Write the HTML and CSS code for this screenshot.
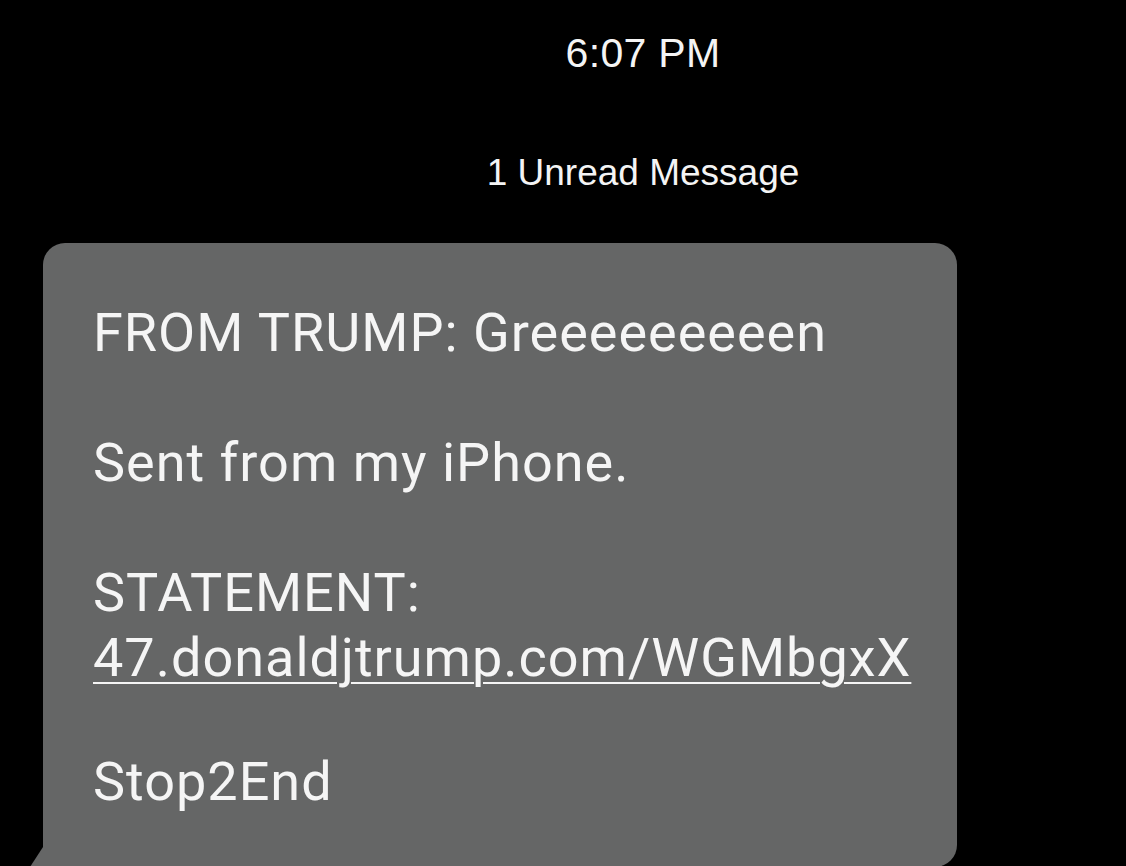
FILE: index.html
```html
<!DOCTYPE html>
<html lang="en">
<head>
<meta charset="utf-8">
<title>Message</title>
<link rel="stylesheet" href="styles.css">
</head>
<body>
<main class="screen">
  <header class="header">
    <div class="time">6:07 PM</div>
    <div class="unread">1 Unread Message</div>
  </header>
  <section class="bubble">
    <p class="para">FROM TRUMP: Greeeeeeeeen</p>
    <p class="para">Sent from my iPhone.</p>
    <p class="para">STATEMENT:<br><a class="link" href="#">47.donaldjtrump.com/WGMbgxX</a></p>
    <p class="para">Stop2End</p>
  </section>
</main>
</body>
</html>
```

FILE: styles.css
```css
html, body {
  margin: 0;
  padding: 0;
  background: #000;
  height: 100%;
  overflow: hidden;
}

.screen {
  display: flex;
  flex-direction: column;
  width: 1126px;
  height: 866px;
  overflow: hidden;
  background: #000;
}

.header {
  display: flex;
  flex-direction: column;
  align-items: center;
  padding: 30px 0 0 160px;
  color: #f4f4f4;
  font-family: "Liberation Sans", Arial, sans-serif;
}

.time {
  font-size: 41px;
  line-height: 47px;
  letter-spacing: 0.3px;
}

.unread {
  margin-top: 74px;
  font-size: 37px;
  line-height: 43px;
  letter-spacing: 0;
}

.bubble {
  position: relative;
  margin: 49px 169px 0 43px;
  padding: 57px 40px 53px 50px;
  background: #656666;
  border-radius: 22px 22px 22px 0;
  color: #f5f5f5;
  font-family: Roboto, "Noto Sans", sans-serif;
  font-size: 54px;
  line-height: 65px;
  letter-spacing: 1px;
}

.bubble::before {
  content: "";
  position: absolute;
  left: -13px;
  bottom: 0;
  width: 0;
  height: 0;
  border-right: 13px solid #656666;
  border-top: 20px solid transparent;
}

.para {
  margin: 0 0 65px 0;
}

.para:nth-child(3) {
  margin-bottom: 59px;
}

.para:last-child {
  margin-bottom: 0;
}

.link {
  color: #f5f5f5;
  text-decoration: underline;
  text-decoration-thickness: 2px;
  text-underline-offset: 6px;
}
```
